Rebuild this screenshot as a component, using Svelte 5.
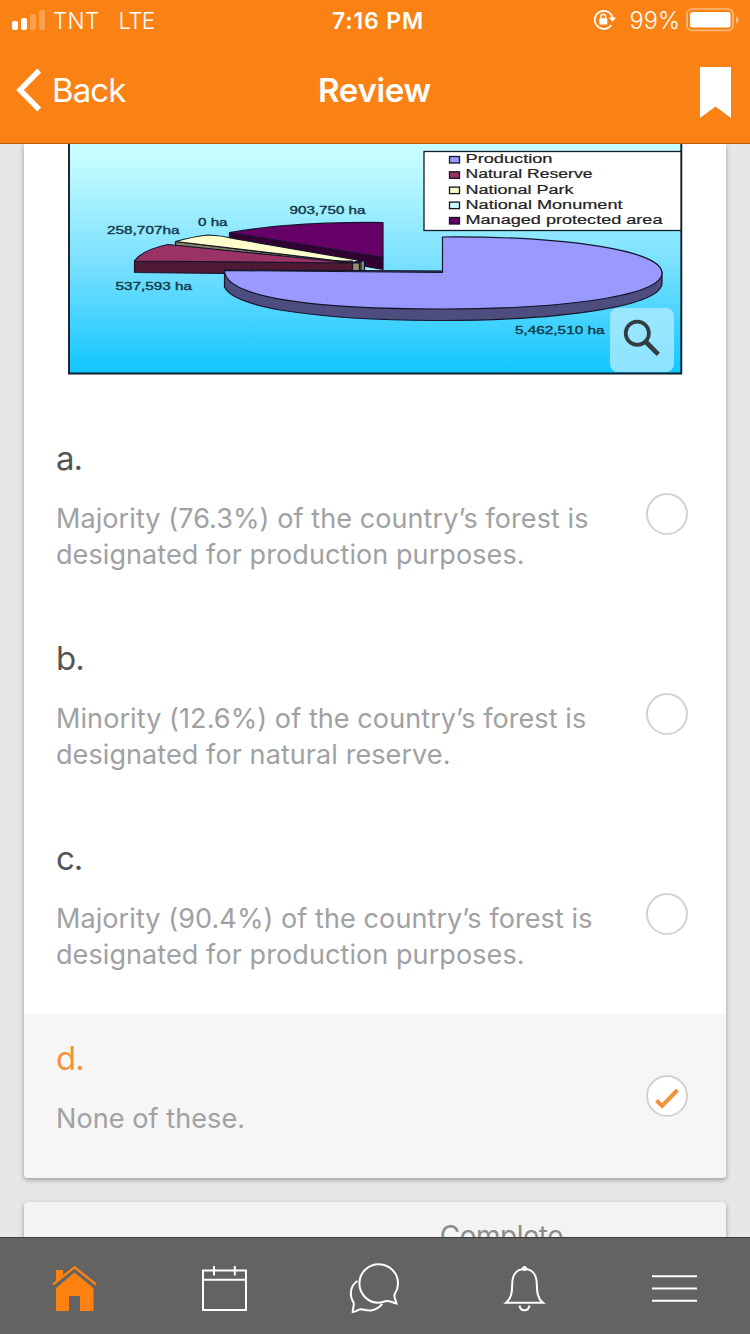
<script>
  const options = [
    { label: 'a.', lines: ['Majority (76.3%) of the country’s forest is', 'designated for production purposes.'] },
    { label: 'b.', lines: ['Minority (12.6%) of the country’s forest is', 'designated for natural reserve.'] },
    { label: 'c.', lines: ['Majority (90.4%) of the country’s forest is', 'designated for production purposes.'] },
    { label: 'd.', lines: ['None of these.'] }
  ];
  let selected = $state(3);

  const legend = [
    { name: 'Production', color: '#9999ff', y: 159, width: 87 },
    { name: 'Natural Reserve', color: '#993366', y: 174.3, width: 127 },
    { name: 'National Park', color: '#ffffcc', y: 189.6, width: 108 },
    { name: 'National Monument', color: '#ccffff', y: 204.6, width: 157 },
    { name: 'Managed protected area', color: '#660066', y: 220, width: 197 }
  ];
  const amounts = [
    { text: '903,750 ha', x: 289.5, y: 213.5, width: 76 },
    { text: '0 ha', x: 198, y: 225.5, width: 29.5 },
    { text: '258,707ha', x: 107, y: 233.7, width: 72.5 },
    { text: '537,593 ha', x: 115.5, y: 290, width: 76.5 },
    { text: '5,462,510 ha', x: 515, y: 334, width: 89.5 }
  ];
</script>

<div class="screen">
  <header>
    <div class="status">
      <div class="carrier">
        <svg width="34" height="22" viewBox="0 0 34 22">
          <rect x="0" y="12" width="6" height="9" rx="2" fill="#fff" />
          <rect x="9" y="9" width="6" height="12" rx="2" fill="#fff" />
          <rect x="18" y="5" width="6" height="16" rx="2" fill="#fff" opacity=".25" />
          <rect x="27" y="1" width="6" height="20" rx="2" fill="#fff" opacity=".25" />
        </svg>
        <span class="tnt">TNT</span>
        <span class="lte">LTE</span>
      </div>
      <div class="time">7:16 PM</div>
      <div class="power">
        <svg class="lock" width="24" height="22" viewBox="0 0 24 22">
          <path d="M18.2 16A9 9 0 1 1 19.6 9" fill="none" stroke="#fff" stroke-width="1.8" />
          <path d="M15.8 8.5h7.4l-3.7 4.3z" fill="#fff" />
          <rect x="6.300" y="9.300" width="8" height="6.200" rx="1" fill="#fff" />
          <path d="M8 10V7.600a2.300 2.300 0 0 1 4.600 0V10" fill="none" stroke="#fff" stroke-width="1.400" />
        </svg>
        <span class="percent">99%</span>
        <svg width="53" height="24" viewBox="0 0 53 24">
          <rect x="1" y="1" width="46" height="21.500" rx="5" fill="none" stroke="#fff" stroke-width="1.600" opacity=".45" />
          <rect x="4" y="4" width="40.500" height="15.500" rx="2.500" fill="#fff" />
          <path d="M50 8.300q2.800 1 2.800 3.700t-2.800 3.700z" fill="#fff" opacity=".45" />
        </svg>
      </div>
    </div>
    <nav>
      <button class="back">
        <svg width="27" height="44" viewBox="0 0 27 44"><path d="M23.200 2.500 4 22l19.200 19.500" fill="none" stroke="#fff" stroke-width="5.400" /></svg>
        <span>Back</span>
      </button>
      <h1>Review</h1>
      <svg class="bookmark" width="31" height="51" viewBox="0 0 31 51"><path d="M0 0h31v51L15.500 39.500 0 51z" fill="#fff" /></svg>
    </nav>
  </header>

  <main>
    <section class="card question">
      <svg class="chart" width="702" height="270" viewBox="24 144 702 270">
        <defs>
          <linearGradient id="sky" x1="0" y1="0" x2="0" y2="1">
            <stop offset="0" stop-color="#ccffff" />
            <stop offset=".12" stop-color="#c4fcff" />
            <stop offset=".55" stop-color="#79e0ff" />
            <stop offset="1" stop-color="#10c6ff" />
          </linearGradient>
        </defs>
        <rect x="69" y="130" width="612" height="243.500" fill="url(#sky)" />
        <path d="M69 140V373.500H681.300V140" fill="none" stroke="#10202c" stroke-width="1.900" />
        <g stroke="#15152a" stroke-width="1.200" stroke-linejoin="round">
          <path d="M229.500 232.500 383 257.500V270L362 266 354 259.500 229.500 238z" fill="#330033" />
          <path d="M229.500 232.500Q265 227 285 225.500Q330 222 383 222.500V257.500z" fill="#660066" />
          <path d="M365 267 383 270V272H365z" fill="#a8effb" stroke="none" />
          <path d="M175.500 241.500 352 262.500H364V271.500H358L175.500 246z" fill="#80805f" />
          <path d="M175.500 241.500Q193 236.500 208 235Q222 235.500 233 238.500L360 260.500 352 262.500z" fill="#ffffcc" />
          <path d="M134.500 261H352.500V271.500H225V273.500L134.500 272.500z" fill="#4d1933" />
          <path d="M134.500 261Q142 250 168 244.500L352.500 263z" fill="#993366" />
          <path d="M352.500 263h7v8.500h-7z" fill="#938e70" />
          <path d="M361 261h3.500v10.500H361z" fill="#739399" />
          <path d="M224.500 270V287Q231 301 280 310Q350 321 443 320.500C570 320 662 305 662 283V272z" fill="#4d4d80" />
          <path d="M224.500 270.500 442.500 272.500V237C570 236 662 251 662 273C662 295 570 309 443 309C315 309 225 298 224.500 270.500z" fill="#9999ff" />
        </g>
        <rect x="424" y="151.500" width="257" height="79" fill="#fff" stroke="#111c25" stroke-width="1.300" />
        {#each legend as item}
          <rect x="449.500" y={item.y - 2.5} width="10" height="6.500" fill={item.color} stroke="#151522" stroke-width="1.300" />
          <text class="name" x="465.500" y={item.y + 3.9} font-size="12.500" textLength={item.width} lengthAdjust="spacingAndGlyphs">{item.name}</text>
        {/each}
        {#each amounts as item}
          <text class="amount" x={item.x} y={item.y} font-size="10.500" textLength={item.width} lengthAdjust="spacingAndGlyphs">{item.text}</text>
        {/each}
        <rect x="610" y="308" width="64" height="64" rx="8" fill="#b4edff" fill-opacity=".76" />
        <circle cx="637.300" cy="333.200" r="11.600" fill="none" stroke="#343c40" stroke-width="3.700" />
        <path d="m646 342 12.300 12.300" stroke="#343c40" stroke-width="4.600" />
      </svg>
      {#each options as option, i}
        <button class="option" class:selected={selected === i} onclick={() => (selected = i)}>
          <span class="copy">
            <span class="label">{option.label}</span>
            {#each option.lines as line}<span class="line">{line}</span>{/each}
          </span>
          <span class="radio">
            {#if selected === i}
              <svg width="38" height="38" viewBox="0 0 38 38"><path d="m8.500 23.500 5.500 5.500L29.500 13" fill="none" stroke="#f4923b" stroke-width="4" /></svg>
            {/if}
          </span>
        </button>
      {/each}
    </section>
    <section class="card progress"><span>Complete</span></section>
  </main>

  <footer>
    <svg width="150" height="96" viewBox="0 1238 150 96" fill="#fd8212">
      <path d="M56 1270h7v5.500l-7 6zM74.500 1272.500l19 15.500v23H80v-15H69v15H56v-23z" />
      <path d="m53 1284.500 21.500-17.300L96 1284.500" fill="none" stroke="#fd8212" stroke-width="2.300" />
    </svg>
    <svg width="150" height="96" viewBox="150 1238 150 96" class="outline">
      <path d="M203 1270.500h43V1310h-43zM203 1279.700h43M214 1266v9.500M234.800 1266v9.500" />
    </svg>
    <svg width="150" height="96" viewBox="300 1238 150 96" class="outline">
      <path d="M396.500 1303.500c-4-1-6.500-2.500-9.500-2.500-2.500 0-5 1.800-9 1.800a19.300 19.300 0 1 1 20-19c0 5-1.500 7.500-3.200 10.200-1.500 3 .9 5.800 1.700 9.500z" />
      <path d="M357.500 1281c-8 5-8 15-4 21.500 1.200 2.500-.7 5-.8 9.500 3.500-.3 5-2.600 8-2.800 3-.1 5.300 1.600 10 1.200 5-.4 8.500-2.500 11.500-6.500" />
    </svg>
    <svg width="150" height="96" viewBox="450 1238 150 96" class="outline">
      <path d="M506 1302.700c6-4.700 6-12 6.200-19 .3-9 4.700-14.700 12.300-14.700s12 5.700 12.300 14.700c.2 7 .2 14.300 6.200 19z" />
      <path d="M519.500 1305.500c1 6.300 9 6.300 10 0" />
      <circle cx="524.500" cy="1268.500" r="2.500" fill="#fff" stroke="none" />
    </svg>
    <svg width="150" height="96" viewBox="600 1238 150 96" class="outline">
      <path d="M652 1276.200h45M652 1288.500h45M652 1300.800h45" />
    </svg>
  </footer>
</div>

<style>
  :global(body) { margin: 0; overflow: hidden; }
  * { box-sizing: border-box; }
  .screen { width: 750px; height: 1334px; display: flex; flex-direction: column; background: #e7e7e7; font-family: Inter, 'Liberation Sans', sans-serif; overflow: hidden; }
  svg { display: block; flex: none; }
  button { border: 0; margin: 0; padding: 0; background: none; font: inherit; text-align: left; }
  header { height: 144px; flex: none; background: #fa8214; border-bottom: 1px solid #b45c0e; color: #fff; }
  .status { height: 40px; padding: 0 11px 0 12px; display: grid; grid-template-columns: 320px 1fr 155px; align-items: center; font-size: 22.500px; white-space: nowrap; }
  .carrier, .power { display: flex; align-items: center; }
  .carrier { font-weight: 300; }
  .tnt { margin-left: 7px; letter-spacing: .3px; }
  .lte { margin-left: 19px; letter-spacing: -.9px; }
  .time { font-weight: 600; font-size: 23px; letter-spacing: .85px; line-height: 30px; padding-top: 1px; }
  .power { justify-content: flex-end; font-weight: 300; }
  .percent { margin: 1px 6px 0 12px; font-size: 23.500px; letter-spacing: .1px; }
  nav { height: 103px; padding: 0 19px 2px 16px; display: grid; grid-template-columns: 1fr auto 1fr; align-items: center; }
  .back { display: flex; align-items: center; gap: 9px; color: #fff; font-size: 33px; letter-spacing: -.9px; line-height: 44px; padding-bottom: 1px; }
  .back svg { margin-top: -1px; }
  h1 { margin: 0; font-size: 33px; font-weight: 600; line-height: 44px; letter-spacing: -.3px; padding: 0 0 1px 2px; }
  .bookmark { justify-self: end; margin-top: 4px; }
  main { flex: 1; min-height: 0; overflow: hidden; padding: 0 24px; display: flex; flex-direction: column; gap: 24px; }
  .card { flex: none; box-shadow: 0 2px 5px rgba(0,0,0,.34); background: #fff; }
  .question { border-radius: 0 0 4px 4px; overflow: hidden; }
  .chart { font-family: 'Liberation Sans', sans-serif; fill: #222; }
  .name { stroke: #222; stroke-width: .2px; }
  .amount { fill: #143746; stroke: #143746; stroke-width: .35px; }
  .option { width: 100%; padding: 24px 38px 41px 32px; display: flex; justify-content: space-between; align-items: center; }
  .selected { background: #f6f6f6; }
  .copy { display: flex; flex-direction: column; }
  .label { height: 40px; line-height: 40px; margin-bottom: 23px; font-size: 33px; letter-spacing: -1px; color: #555; }
  .selected .label { color: #f4923b; }
  .line { height: 36px; line-height: 36px; font-size: 27px; letter-spacing: .085px; color: #a0a1a3; white-space: nowrap; }
  .radio { width: 42px; height: 42px; margin-top: 17px; border: 2px solid #d2d2d2; border-radius: 50%; background: #fff; }
  .progress { height: 180px; border-radius: 4px; background: #f3f3f3; padding: 18px 163px 0 0; text-align: right; font-size: 28px; line-height: 32px; letter-spacing: -.5px; color: #8c8c8c; }
  footer { flex: none; height: 97px; display: flex; background: #636363; border-top: 1px solid #3e3e3e; }
  .outline { fill: none; stroke: #fff; stroke-width: 2; }
</style>
